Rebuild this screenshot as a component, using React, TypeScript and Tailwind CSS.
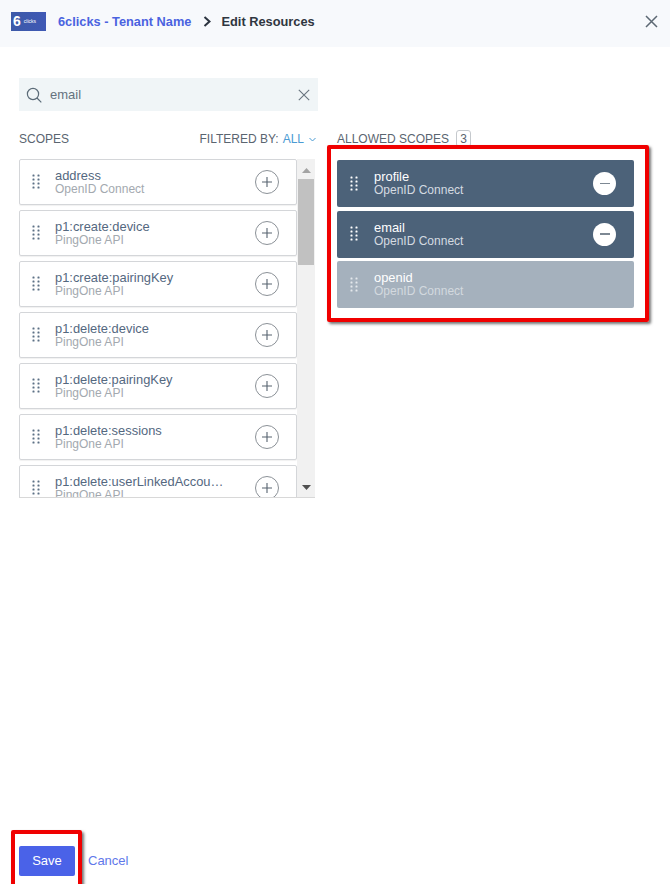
import React from "react";

function Dots({ className }: { className: string }) {
  return (
    <svg width="8" height="16" viewBox="0 0 8 16" className={className} fill="currentColor">
      {[1.5, 6.5].map((x) =>
        [1.5, 5.5, 9.5, 13.5].map((y) => <rect key={`${x}-${y}`} x={x - 1} y={y - 1} width="2" height="2" rx="0.6" />)
      )}
    </svg>
  );
}

function ScopeRow({ name, group }: { name: string; group: string }) {
  return (
    <div className="h-[46px] shrink-0 flex items-center border border-[#d4d6d9] rounded-[2px] bg-white shadow-[0_1px_1px_rgba(0,0,0,0.06)] pl-[12px] pr-[17px]">
      <Dots className="text-[#5d7186] shrink-0" />
      <div className="ml-[15px] flex-1 min-w-0">
        <div className="truncate text-[#54687f] w-[172px] text-[12.9px] leading-[14px]">{name}</div>
        <div className="text-[#a3a9af] text-[12px] leading-[13px]">{group}</div>
      </div>
      <div className="w-[24px] h-[24px] rounded-full border border-[#8b9197] flex items-center justify-center shrink-0">
        <svg width="12" height="12" viewBox="0 0 12 12" stroke="#56636f" strokeWidth="1.1">
          <path d="M6 1v10M1 6h10" />
        </svg>
      </div>
    </div>
  );
}

function AllowedRow({ name, locked }: { name: string; locked?: boolean }) {
  return (
    <div className={`h-[47px] flex items-center rounded-[2px] pl-[13px] pr-[18px] ${locked ? "bg-[#a5b1bd]" : "bg-[#4c6279]"}`}>
      <Dots className={`shrink-0 ${locked ? "text-[#e4e8ec]" : "text-white"}`} />
      <div className="ml-[16px] flex-1">
        <div className="text-white text-[12.9px] leading-[14px]">{name}</div>
        <div className={`text-[12px] leading-[13px] ${locked ? "text-[#d3d9df]" : "text-[#d5dbe1]"}`}>OpenID Connect</div>
      </div>
      {!locked && (
        <div className="w-[23px] h-[23px] rounded-full bg-white flex items-center justify-center">
          <div className="w-[10px] h-[1.5px] bg-[#7d8893]" />
        </div>
      )}
    </div>
  );
}

const scopes = [
  ["address", "OpenID Connect"],
  ["p1:create:device", "PingOne API"],
  ["p1:create:pairingKey", "PingOne API"],
  ["p1:delete:device", "PingOne API"],
  ["p1:delete:pairingKey", "PingOne API"],
  ["p1:delete:sessions", "PingOne API"],
  ["p1:delete:userLinkedAccounts", "PingOne API"],
];

export default function App() {
  return (
    <div className="relative w-[670px] h-[884px] bg-white overflow-hidden font-['Liberation_Sans',Arial,sans-serif]">
      <header className="h-[47px] bg-[#f7f9fc] flex items-center pl-[11px] pr-[12px]">
        <div className="w-[35px] h-[19px] bg-gradient-to-r from-[#3d5aa8] to-[#3f59b5] flex items-center overflow-hidden -mt-[5px] pl-[2px]">
          <span className="text-white text-[14px] font-bold leading-none">6</span>
          <span className="ml-[3px] text-white text-[5px] leading-none">clicks</span>
        </div>
        <span className="ml-[12px] text-[12.8px] font-bold text-[#4a63e0] -mt-[4px]">6clicks - Tenant Name</span>
        <svg width="8" height="11" viewBox="0 0 8 11" fill="none" stroke="#2c3440" strokeWidth="2" className="ml-[12px] -mt-[4px]">
          <path d="M1.5 1l5 4.5-5 4.5" />
        </svg>
        <span className="ml-[10px] text-[12.8px] font-bold text-[#2f3640] -mt-[4px]">Edit Resources</span>
        <svg width="13" height="13" viewBox="0 0 13 13" fill="none" stroke="#5c6873" strokeWidth="1.5" className="ml-auto -mt-[5px]">
          <path d="M1 1l11 11M12 1L1 12" />
        </svg>
      </header>

      <div className="pl-[19px] pt-[31px]">
        <div className="w-[299px] h-[33px] bg-[#f0f5f7] flex items-center pl-[7px] pr-[8px]">
          <svg width="16" height="16" viewBox="0 0 16 16" fill="none" stroke="#5b6b78" strokeWidth="1.2">
            <circle cx="7" cy="7" r="5.6" />
            <path d="M11 11l4.3 4.3" />
          </svg>
          <span className="ml-[8px] text-[13px] text-[#65727e]">email</span>
          <svg width="12" height="12" viewBox="0 0 12 12" fill="none" stroke="#68747f" strokeWidth="1.1" className="ml-auto">
            <path d="M.8.8l10.4 10.4M11.2.8L.8 11.2" />
          </svg>
        </div>

        <div className="flex mt-[20px]">
          <div className="w-[298px]">
            <div className="h-[16px] flex items-center justify-between text-[12px] text-[#5a6570]">
              <span>SCOPES</span>
              <span className="flex items-center">
                FILTERED BY:
                <span className="ml-[4px] text-[#4b9bd3]">ALL</span>
                <svg width="7" height="5" viewBox="0 0 7 5" fill="none" stroke="#4b9bd3" className="ml-[5px] mr-[1px]">
                  <path d="M.5 1l3 3 3-3" />
                </svg>
              </span>
            </div>
            <div className="mt-[12px] w-[296px] h-[339px] flex border-b border-[#d8d8d8] overflow-hidden">
              <div className="w-[278px] flex flex-col gap-[5px]">
                {scopes.map(([n, g]) => (
                  <ScopeRow key={n} name={n} group={g} />
                ))}
              </div>
              <div className="w-[18px] bg-[#f1f1f1] flex flex-col items-center">
                <svg width="9" height="5" viewBox="0 0 9 5" fill="#a3a3a3" className="mt-[9px]">
                  <path d="M4.5 0L9 5H0z" />
                </svg>
                <div className="w-[16px] h-[86px] bg-[#c1c1c1] mt-[6px]" />
                <svg width="9" height="5" viewBox="0 0 9 5" fill="#505050" className="mt-[220px]">
                  <path d="M0 0h9L4.5 5z" />
                </svg>
              </div>
            </div>
          </div>

          <div className="ml-[20px] w-[297px]">
            <div className="h-[16px] flex items-center text-[12px] text-[#5a6570]">
              <span>ALLOWED SCOPES</span>
              <span className="ml-[7px] w-[15px] h-[17px] border border-[#c5c9cd] rounded-[3px] flex items-center justify-center text-[12px] -mt-[1px]">3</span>
            </div>
            <div className="mt-[13px] flex flex-col gap-[3.5px]">
              <AllowedRow name="profile" />
              <AllowedRow name="email" />
              <AllowedRow name="openid" locked />
            </div>
          </div>
        </div>
      </div>

      <footer className="absolute left-[19px] bottom-[8px] flex items-center">
        <button className="w-[56px] h-[30px] bg-[#4a62e8] rounded-[2px] text-white text-[13px]">Save</button>
        <span className="ml-[13px] text-[13px] text-[#5f78ea]">Cancel</span>
      </footer>

      <div className="absolute left-[327px] top-[145px] w-[322px] h-[177px] border-[4px] border-[#f00000] rounded-[2px] shadow-[2px_2px_3px_rgba(0,0,0,0.55)]" />
      <div className="absolute left-[11px] top-[830px] w-[71px] h-[60px] border-[4px] border-[#f00000] rounded-[2px] shadow-[2px_2px_3px_rgba(0,0,0,0.55)]" />
    </div>
  );
}
